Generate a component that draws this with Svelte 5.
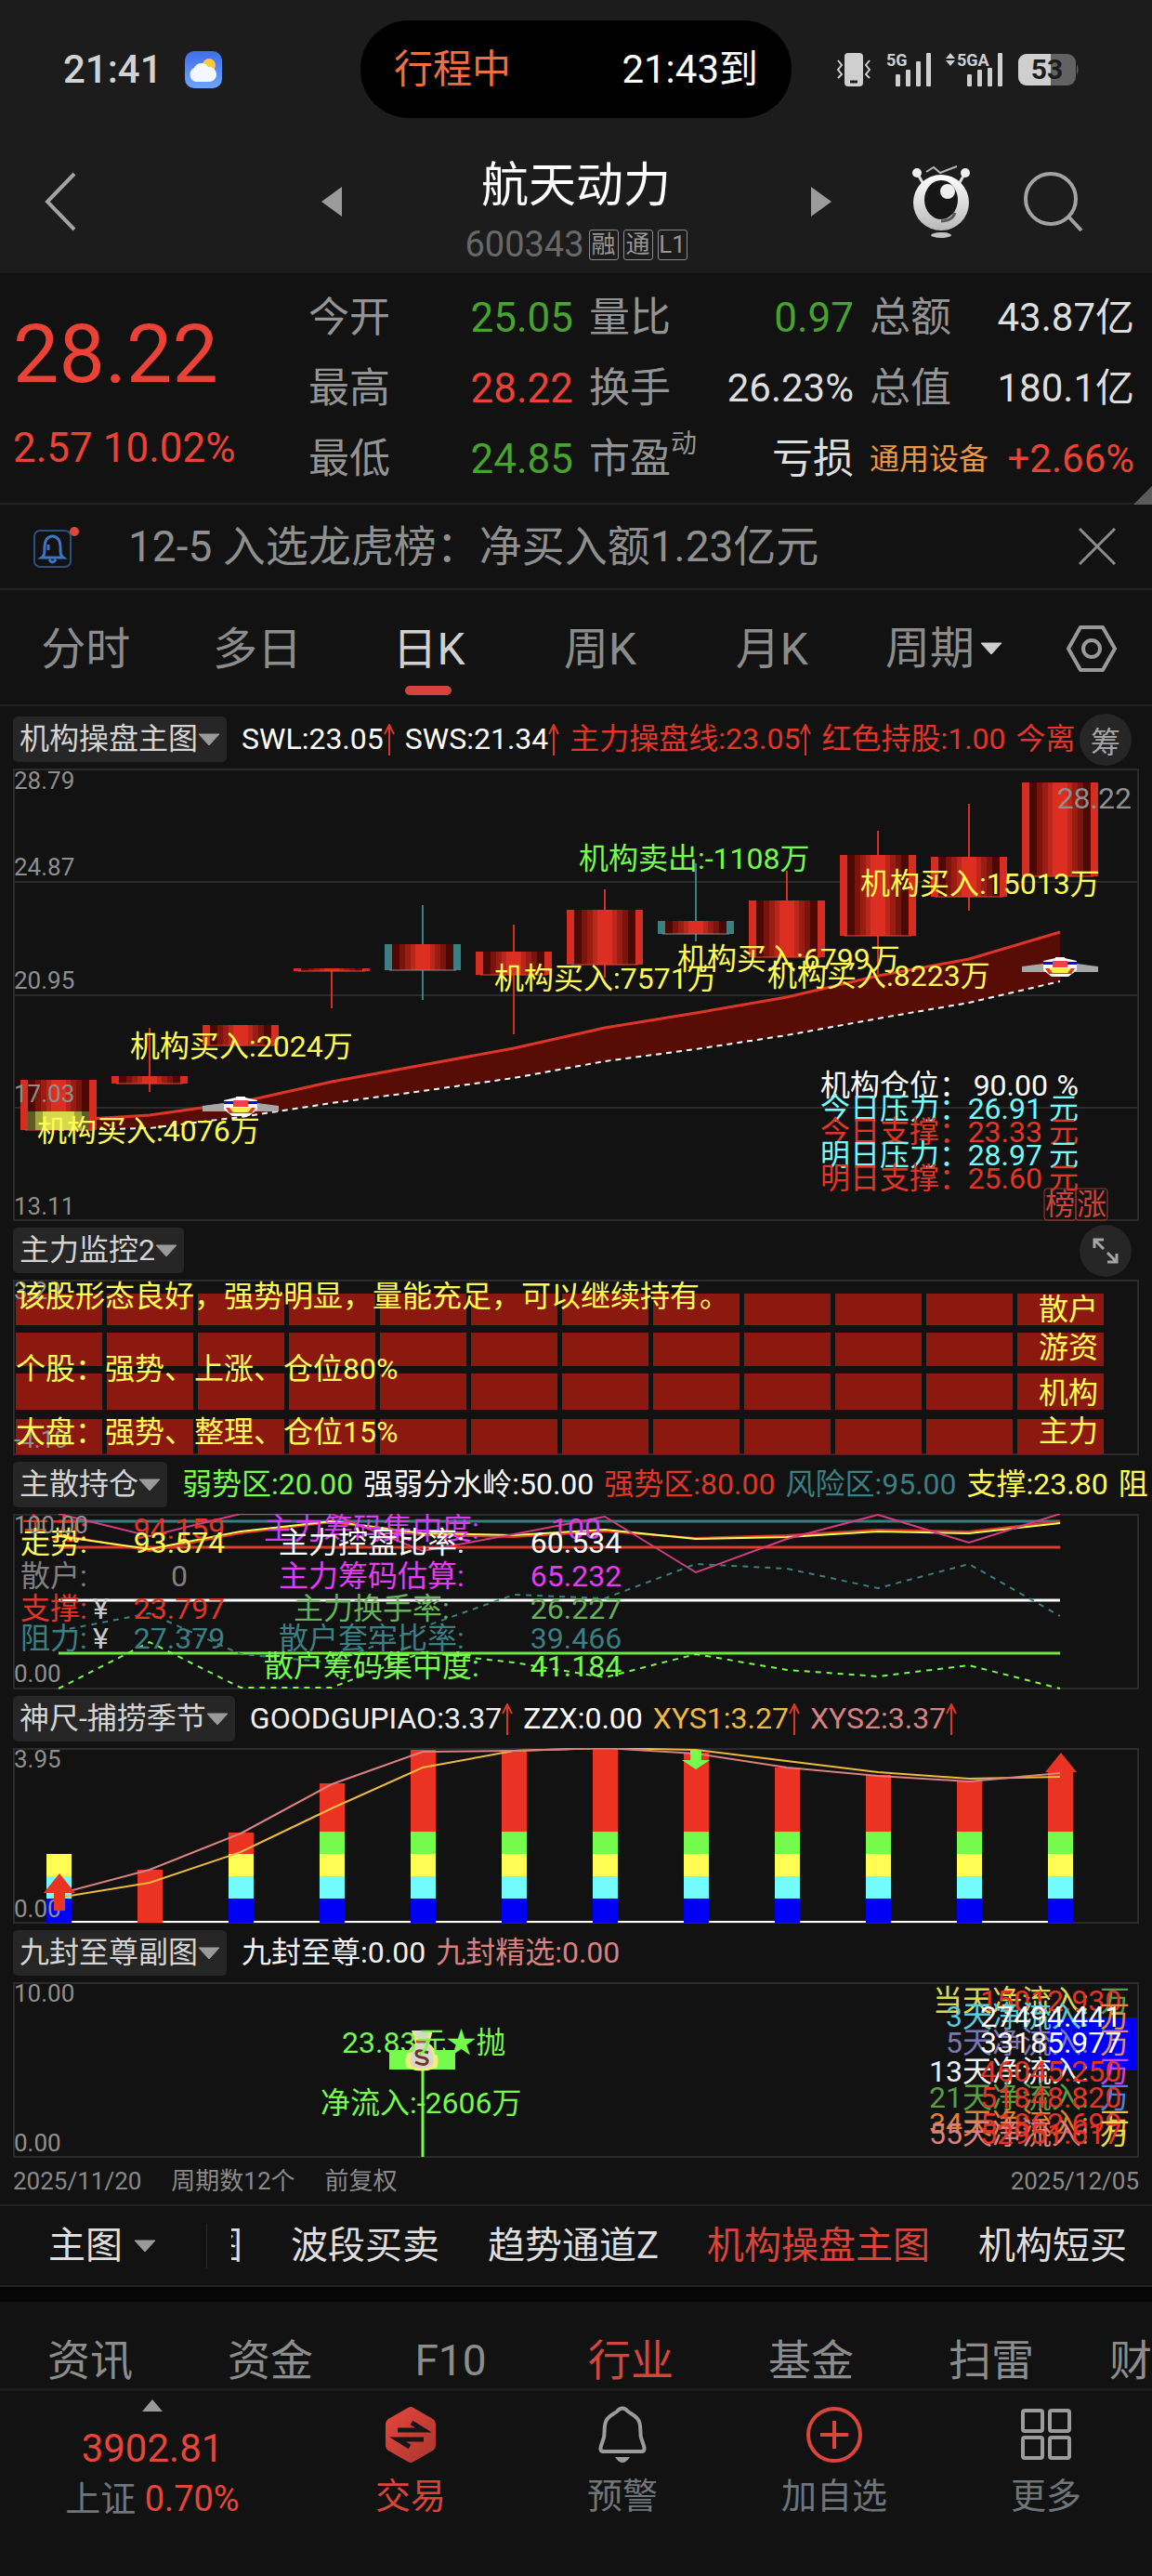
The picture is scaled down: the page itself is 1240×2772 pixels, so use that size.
<script>
	let activePeriod = '日K';
	let activeTab = '行业';
	let activeStrategy = '机构操盘主图';
	let showNotice = true;

	const periods = ['分时', '多日', '日K', '周K', '月K'];
	const tabs = ['资讯', '资金', 'F10', '行业', '基金', '扫雷', '财'];
	const strategies = ['图', '波段买卖', '趋势通道Z', '机构操盘主图', '机构短买'];

	const RED = '#e33527';
	const TEAL = '#3b7f82';
	const LIME = '#75fb4c';
	const YELLOW = '#fffb54';
	const CYAN = '#74fbfd';

	const quotes = [
		[
			{ label: '今开', value: '25.05', tone: 'down' },
			{ label: '最高', value: '28.22', tone: 'up' },
			{ label: '最低', value: '24.85', tone: 'down' }
		],
		[
			{ label: '量比', value: '0.97', tone: 'down' },
			{ label: '换手', value: '26.23%', tone: 'small' },
			{ label: '市盈', note: '动', value: '亏损', tone: '' }
		],
		[
			{ label: '总额', value: '43.87亿', tone: 'small' },
			{ label: '总值', value: '180.1亿', tone: 'small' },
			{ label: '通用设备', value: '+2.66%', tone: 'small up', sector: true }
		]
	];

	const legends = {
		main: [
			{ text: 'SWL:23.05', color: '#ffffff', up: true },
			{ text: 'SWS:21.34', color: '#ffffff', up: true },
			{ text: '主力操盘线:23.05', color: RED, up: true },
			{ text: '红色持股:1.00', color: RED },
			{ text: '今离', color: RED }
		],
		hold: [
			{ text: '弱势区:20.00', color: LIME },
			{ text: '强弱分水岭:50.00', color: '#ffffff' },
			{ text: '强势区:80.00', color: RED },
			{ text: '风险区:95.00', color: TEAL },
			{ text: '支撑:23.80', color: YELLOW },
			{ text: '阻', color: YELLOW }
		],
		ruler: [
			{ text: 'GOODGUPIAO:3.37', color: '#f0f0f0', up: true },
			{ text: 'ZZX:0.00', color: '#ffffff' },
			{ text: 'XYS1:3.27', color: '#efb93f', up: true },
			{ text: 'XYS2:3.37', color: '#d98080', up: true }
		],
		seal: [
			{ text: '九封至尊:0.00', color: '#f0f0f0' },
			{ text: '九封精选:0.00', color: '#d98080' }
		]
	};

	// chart geometry: 12 sessions, one every 98 units
	const cx = (i) => 49 + i * 98;
	const line = (values) => values.map((y, i) => `${cx(i)},${y}`).join(' ');
	const shades = [
		{ half: 33, fill: '#4a0903' },
		{ half: 25, fill: '#7a150d' },
		{ half: 19, fill: '#9a1d13' },
		{ half: 13, fill: '#b9261a' },
		{ half: 8, fill: '#dc2f21' }
	];

	const candles = [
		{ top: 335, bottom: 389, mark: 369 },
		{ top: 331, bottom: 339, high: 279, low: 348 },
		{ top: 276, bottom: 298 },
		{ top: 215, bottom: 218, high: 215, low: 258 },
		{ top: 189, bottom: 217, high: 147, low: 249, down: true },
		{ top: 197, bottom: 222, high: 168, low: 286 },
		{ top: 152, bottom: 211, high: 130, low: 225 },
		{ top: 164, bottom: 178, high: 102, low: 186, down: true },
		{ top: 142, bottom: 203, high: 110, low: 203 },
		{ top: 93, bottom: 180, high: 67, low: 221 },
		{ top: 95, bottom: 138, high: 38, low: 153 },
		{ top: 15, bottom: 116 }
	];
	const trendUp = [379, 373, 359, 337, 319, 301, 279, 263, 246, 223, 205, 176];
	const trendLow = [389, 387, 375, 360, 347, 333, 315, 302, 287, 269, 252, 229];
	const trendArea = line(trendUp) + ' ' + line(trendLow).split(' ').reverse().join(' ');

	const flows = [
		{ x: 26, y: 401, text: '机构买入:4076万' },
		{ x: 126, y: 310, text: '机构买入:2024万' },
		{ x: 518, y: 237, text: '机构买入:7571万' },
		{ x: 609, y: 108, text: '机构卖出:-1108万', sell: true },
		{ x: 715, y: 216, text: '机构买入:6799万' },
		{ x: 812, y: 234, text: '机构买入:8223万' },
		{ x: 912, y: 135, text: '机构买入:15013万' }
	];
	const levels = [
		{ label: '机构仓位：', value: '90.00', unit: '%', color: '#ffffff', end: 1114 },
		{ label: '今日压力：', value: '26.91', unit: '元', color: CYAN, end: 1108 },
		{ label: '今日支撑：', value: '23.33', unit: '元', color: RED, end: 1108 },
		{ label: '明日压力：', value: '28.97', unit: '元', color: CYAN, end: 1108 },
		{ label: '明日支撑：', value: '25.60', unit: '元', color: RED, end: 1108 }
	];

	const heatRows = [
		{ y: 15, h: 34, name: '散户', base: 43 },
		{ y: 57, h: 36, name: '游资', base: 84 },
		{ y: 101, h: 39, name: '机构', base: 133 },
		{ y: 150, h: 38, name: '主力', base: 174 }
	];

	const trend = [24, 38, 19, 8, 21, 23, 17, 27, 25, 19, 21, 10];
	const force = [22, 40, 21, 9, 23, 25, 19, 26, 23, 17, 19, 8];
	const pink = [0, 24, 0, 0, 40, 22, 3, 63, 27, 1, 31, 0];
	const risk = [126, 107, 151, 160, 122, 87, 91, 54, 59, 80, 54, 110];
	const retail = [188, 138, 187, 187, 149, 160, 176, 151, 168, 175, 163, 188];
	const holdLeft = [
		{ label: '主力:', value: '94.159', y: 27, color: RED },
		{ label: '走势:', value: '93.574', y: 42, color: YELLOW },
		{ label: '散户:', value: '0', y: 78, color: '#808080' },
		{ label: '支撑:', value: '23.797', y: 113, color: RED, yuan: true },
		{ label: '阻力:', value: '27.379', y: 145, color: TEAL, yuan: true }
	];
	const holdRight = [
		{ label: '主力筹码集中度:', value: '100', y: 27, color: '#d93bf0' },
		{ label: '主力控盘比率:', value: '60.534', y: 42, color: '#ffffff' },
		{ label: '主力筹码估算:', value: '65.232', y: 78, color: '#e53bf5' },
		{ label: '主力换手率:', value: '26.227', y: 113, color: '#67b359' },
		{ label: '散户套牢比率:', value: '39.466', y: 145, color: TEAL },
		{ label: '散户筹码集中度:', value: '41.184', y: 175, color: LIME }
	];

	const barTops = [114, 131, 91, 38, 2, 2, 0, 5, 21, 29, 35, 26];
	const xys1 = [161, 145, 112, 65, 21, 3, 0, 2, 14, 26, 33, 31];
	const xys2 = [157, 131, 92, 39, 4, 3, 0, 6, 21, 30, 36, 27];
	const steps = [
		{ y: 90, h: 24, fill: LIME, from: 3 },
		{ y: 114, h: 24, fill: '#fffd54', from: 0 },
		{ y: 138, h: 24, fill: CYAN, from: 0 },
		{ y: 162, h: 26, fill: '#0000f5', from: 0 }
	];

	const inflow = [
		{ x: 990, y: 31, label: '当天净流入:', value: '15012.930', color: '#dcd84e', num: RED, unit: '#5c9a48' },
		{ x: 1004, y: 48, label: '3天净流入:', value: '27494.441', color: '#5bc8dc', num: '#ffffff', unit: '#e9893c' },
		{ x: 1004, y: 76, label: '5天净流入:', value: '33185.977', color: '#7b76b8', num: '#ffffff', unit: '#df8680' },
		{ x: 986, y: 107, label: '13天净流入:', value: '46045.250', color: '#f2f2f2', num: RED, unit: '#cc40ea' },
		{ x: 986, y: 135, label: '21天净流入:', value: '51848.820', color: '#5a9e40', num: RED, unit: '#4a80e4' },
		{ x: 986, y: 163, label: '34天净流入:', value: '51862.699', color: '#e0812f', num: RED, unit: '#f1bd40' },
		{ x: 986, y: 174, label: '55天净流入:', value: '52951.617', color: '#d98080', num: RED, unit: '#ebe04a' }
	];
</script>

{#snippet caret()}
	<svg class="caret" width="24" height="14" viewBox="0 0 24 14"><path d="M1 1h22L12 13z" fill="currentColor" stroke="currentColor" stroke-linejoin="round"/></svg>
{/snippet}

{#snippet panelHead(name, items)}
	<div class="panel-head">
		<button class="chip" aria-haspopup="menu">{name}{@render caret()}</button>
		<div class="legend">
			{#each items as item}
				<span class="legend-item" style="color: {item.color}">
					{item.text}{#if item.up}<svg class="rise" width="12" height="34" viewBox="0 0 12 34" fill="none" stroke="#d8382c" stroke-width="2"><path d="M6 34V2M1 11L6 1l5 10"/></svg>{/if}
				</span>
			{/each}
		</div>
	</div>
{/snippet}

{#snippet ufo(x, y)}
	<g transform="translate({x} {y})">
		<path d="M-41-1L-18-4H18L41-1V5H-41z" fill="#a6a6a6"/>
		<path d="M-18 3V-7L-5-10V-11H5V-10L18-7V3L9 10H-9z" fill="#fff"/>
		<path d="M-18-6H18V-3H-18z" fill="#0b0bd8"/>
		<path d="M-8-7H8V0H-8z" fill="#ef4050"/>
		<path d="M-16 1H16L12 7H-12z" fill="#e33527"/>
		<path d="M-12 1H12L8 6H-8z" fill="#ffee4a"/>
		<path d="M-5 7H5V10H-5z" fill="#fff"/>
	</g>
{/snippet}

<div class="app">
	<header class="top">
		<div class="status">
			<div class="status-left">
				<span class="clock">21:41</span>
				<svg width="40" height="40" viewBox="0 0 40 40">
					<defs>
						<linearGradient id="sky" x2="0" y2="1"><stop offset="0" stop-color="#3f6eea"/><stop offset="1" stop-color="#6ea4ff"/></linearGradient>
					</defs>
					<rect width="40" height="40" rx="10" fill="url(#sky)"/>
					<circle cx="26" cy="15" r="7" fill="#fcc93a"/>
					<path d="M12 33a8 8 0 0 1-2-15 8.500 8.500 0 0 1 15-1 8 8 0 0 1 2 16z" fill="#f4f7ff"/>
				</svg>
			</div>
			<div class="island">
				<span class="trip">行程中</span>
				<span>21:43到</span>
			</div>
			<div class="status-right">
				<svg width="38" height="38" viewBox="0 0 38 38" fill="none" stroke="#cfcfcf" stroke-width="2">
					<rect x="9" y="1" width="20" height="36" rx="4" fill="#cfcfcf" stroke="none"/>
					<path d="M15 32h8" stroke="#1c1c1c" stroke-width="3"/>
					<path d="M2 9l4 5-4 5 4 5-4 4M36 9l-4 5 4 5-4 5 4 4"/>
				</svg>
				<svg width="48" height="38" viewBox="0 0 48 38" fill="#cfcfcf">
					<text x="0" y="15" class="net">5G</text>
					<rect x="10" y="24" width="5" height="13" rx="1"/><rect x="21" y="19" width="5" height="18" rx="1"/><rect x="32" y="10" width="5" height="27" rx="1"/><rect x="43" y="1" width="5" height="36" rx="1"/>
				</svg>
				<svg width="62" height="38" viewBox="0 0 62 38" fill="#cfcfcf">
					<path d="M5 1l5 6H0zM5 15l5-6H0z"/>
					<text x="12" y="15" class="net">5GA</text>
					<rect x="23" y="24" width="5" height="13" rx="1"/><rect x="34" y="19" width="5" height="18" rx="1"/><rect x="45" y="17" width="5" height="20" rx="1"/><rect x="56" y="1" width="5" height="36" rx="1"/>
				</svg>
				<svg width="65" height="34" viewBox="0 0 65 34">
					<rect width="62" height="34" rx="9" fill="#626262"/>
					<path d="M9 0h26v34H9a9 9 0 0 1-9-9V9a9 9 0 0 1 9-9z" fill="#cfcfcf"/>
					<path d="M63 11q3 6 0 12z" fill="#626262"/>
					<text x="31" y="27" class="charge" text-anchor="middle">53</text>
				</svg>
			</div>
		</div>

		<div class="titlebar">
			<div class="nav-cell">
				<button class="icon-btn back" aria-label="返回">
					<svg width="34" height="64" viewBox="0 0 34 64" fill="none" stroke="#a3a3a3" stroke-width="4"><path d="M32 2L3 32l29 30"/></svg>
				</button>
			</div>
			<button class="icon-btn step" aria-label="上一只"><svg width="22" height="32" viewBox="0 0 22 32"><path d="M22 0v32L0 16z" fill="#9b9b9b"/></svg></button>
			<div class="title">
				<h1>航天动力</h1>
				<p>600343 <i>融</i><i>通</i><i>L1</i></p>
			</div>
			<button class="icon-btn step" aria-label="下一只"><svg width="22" height="32" viewBox="0 0 22 32"><path d="M0 0v32l22-16z" fill="#9b9b9b"/></svg></button>
			<div class="nav-cell tools">
				<button class="icon-btn" aria-label="助手">
					<svg width="62" height="78" viewBox="0 0 62 78">
						<defs><linearGradient id="body" x2="0" y2="1"><stop offset="0" stop-color="#fff"/><stop offset="1" stop-color="#b9b9b9"/></linearGradient></defs>
						<path d="M15 7l8-5 7 6L48 1" fill="none" stroke="#b5b5b5" stroke-width="2"/>
						<path d="M5 8l7 12M57 8l-7 12" stroke="#ddd" stroke-width="3"/>
						<circle cx="5" cy="8" r="5" fill="#eee"/><circle cx="57" cy="8" r="5" fill="#eee"/>
						<circle cx="31" cy="40" r="30" fill="url(#body)"/>
						<ellipse cx="31" cy="37" rx="18" ry="21" fill="#161616"/>
						<ellipse cx="38" cy="28" rx="8" ry="8" fill="#eee"/>
						<path d="M31 60q12 0 15-9" fill="none" stroke="#555" stroke-width="3"/>
						<ellipse cx="31" cy="75" rx="11" ry="3" fill="#c4c4c4"/>
					</svg>
				</button>
				<button class="icon-btn" aria-label="搜索">
					<svg width="64" height="66" viewBox="0 0 64 66" fill="none" stroke="#a3a3a3" stroke-width="4"><circle cx="29" cy="30" r="27"/><path d="M48 49l14 15"/></svg>
				</button>
			</div>
		</div>
	</header>

	<section class="quote">
		<div class="price">
			<strong>28.22</strong>
			<span>2.57 10.02%</span>
		</div>
		{#each quotes as column}
			<dl>
				{#each column as row}
					<div class="quote-row">
						<dt class:sector={row.sector}>{row.label}{#if row.note}<sup>{row.note}</sup>{/if}</dt>
						<dd class={row.tone}>{row.value}</dd>
					</div>
				{/each}
			</dl>
		{/each}
		<svg class="corner" width="20" height="20" viewBox="0 0 20 20"><path d="M20 0v20H0z" fill="#5a5a5a"/></svg>
	</section>

	{#if showNotice}
		<section class="notice">
			<svg width="50" height="50" viewBox="0 0 50 50" fill="none" stroke="#3f74c4" stroke-width="2">
				<rect x="1" y="8" width="39" height="39" rx="6" stroke="#2d4f80"/>
				<path d="M9 37c3-2 3-5 3-12 0-6 3-11 8.500-11S29 19 29 25c0 7 0 10 3 12zM17 39q3.500 6 7 0M16 23v6" stroke-width="3"/>
				<circle cx="44" cy="9" r="5" fill="#db473b" stroke="none"/>
			</svg>
			<p>12-5 入选龙虎榜：净买入额1.23亿元</p>
			<button class="icon-btn" aria-label="关闭" on:click={() => (showNotice = false)}>
				<svg width="40" height="40" viewBox="0 0 40 40" stroke="#8c8c8c" stroke-width="3"><path d="M1 1l38 38M39 1L1 39"/></svg>
			</button>
		</section>
	{/if}

	<nav class="periods">
		{#each periods as period}
			<button class:active={activePeriod === period} on:click={() => (activePeriod = period)}>{period}</button>
		{/each}
		<div class="period-more">
			<button aria-haspopup="menu">周期{@render caret()}</button>
			<button class="icon-btn" aria-label="设置">
				<svg width="54" height="50" viewBox="0 0 54 50" fill="none" stroke="#999" stroke-width="4"><path d="M15 2h24l13 23-13 23H15L2 25z" stroke-linejoin="round"/><circle cx="27" cy="25" r="9"/></svg>
			</button>
		</div>
	</nav>

	<main>
		<section class="panel">
			{@render panelHead('机构操盘主图', legends.main)}
			<button class="round">筹</button>
			<svg class="chart" viewBox="0 0 1212 487">
				<path class="frame" d="M1 1H1211V486H1zM1 122H1211M1 244H1211M1 365H1211"/>
				<polygon points={trendArea} fill="#580c06"/>
				<polyline points={line(trendUp)} fill="none" stroke="#df3527" stroke-width="3"/>
				<polyline points={line(trendLow)} fill="none" stroke="#fff" stroke-width="2" stroke-dasharray="6 5"/>
				{#each candles as c, i}
					{@const edge = c.down ? TEAL : '#d52d20'}
					{#if c.high}
						<path d="M{cx(i)} {c.high}V{c.low}" stroke={edge} stroke-width="2"/>
					{/if}
					<rect x={cx(i) - 41} y={c.top} width="82" height={c.bottom - c.top} fill={edge}/>
					{#each shades as s}
						<rect x={cx(i) - s.half} y={c.top} width={s.half * 2} height={c.bottom - c.top} fill={s.fill}/>
					{/each}
					<path d="M{cx(i) - 36} {c.bottom}H{cx(i) + 36}" stroke={c.down ? '#8a8a8a' : '#e0483b'}/>
					{#if c.mark}
						<rect x={cx(i) - 33} y={c.mark} width="66" height={c.bottom - c.mark} fill="#5b5b24"/>
						<rect x={cx(i) - 25} y={c.mark} width="50" height={c.bottom - c.mark} fill="#a3a33c"/>
						<rect x={cx(i) - 17} y={c.mark} width="34" height={c.bottom - c.mark} fill="#d8d84e"/>
					{/if}
				{/each}
				{@render ufo(cx(2), 364)}
				{@render ufo(cx(11), 214)}
				<g class="axis">
					<text x="1" y="22">28.79</text>
					<text x="1" y="115">24.87</text>
					<text x="1" y="237">20.95</text>
					<text x="1" y="359">17.03</text>
					<text x="1" y="480">13.11</text>
				</g>
				{#each flows as f}
					<text x={f.x} y={f.y} fill={f.sell ? LIME : YELLOW}>{f.text}</text>
				{/each}
				<text x="1204" y="43" text-anchor="end" fill="#8f8f8f">28.22</text>
				{#each levels as l, i}
					<g fill={l.color}>
						<text x="869" y={352 + i * 25}>{l.label}</text>
						<text x={l.end} y={352 + i * 25} text-anchor="end">{l.value}</text>
						<text x="1147" y={352 + i * 25} text-anchor="end">{l.unit}</text>
					</g>
				{/each}
				<g fill="none" stroke="#a8352d">
					<rect x="1110" y="452" width="34" height="34" rx="3"/>
					<rect x="1144" y="452" width="34" height="34" rx="3"/>
				</g>
				<g fill="#c9453b">
					<text x="1111" y="480">榜</text>
					<text x="1145" y="480">涨</text>
				</g>
			</svg>
		</section>

		<section class="panel">
			{@render panelHead('主力监控2', [])}
			<button class="round" aria-label="全屏">
				<svg width="28" height="28" viewBox="0 0 28 28" fill="none" stroke="#a5a5a5" stroke-width="3"><path d="M2 11V2h10M2 2l10 10M26 17v9H16M26 26L16 16"/></svg>
			</button>
			<svg class="chart" viewBox="0 0 1212 189">
				<path class="frame" d="M1 1H1211V188H1z"/>
				{#each heatRows as row}
					{#each candles as _, i}
						<rect x={3 + i * 98} y={row.y} width="93" height={row.h} fill="#8b190f"/>
					{/each}
					<text x="1104" y={row.base} fill={YELLOW}>{row.name}</text>
				{/each}
				<g class="axis">
					<text x="1" y="21">3.20</text>
					<text x="1" y="181">-4.10</text>
				</g>
				<g fill={YELLOW}>
					<text x="3" y="29">该股形态良好，强势明显，量能充足，可以继续持有。</text>
					<text x="3" y="107">个股：强势、上涨、仓位80%</text>
					<text x="3" y="175">大盘：强势、整理、仓位15%</text>
				</g>
			</svg>
		</section>

		<section class="panel">
			{@render panelHead('主散持仓', legends.hold)}
			<svg class="chart" viewBox="0 0 1212 189">
				<path class="frame" d="M1 1H1211V188H1z"/>
				<g fill="none" stroke-width="3">
					<path d="M49 8H1127" stroke={TEAL}/>
					<path d="M49 36H1127" stroke="#dc3b2d"/>
					<path d="M49 93H1127" stroke="#fff"/>
					<path d="M49 150H1127" stroke="#6de83f"/>
				</g>
				<g fill="none" stroke-width="2">
					<polyline points={line(force)} stroke={RED}/>
					<polyline points={line(trend)} stroke={YELLOW}/>
					<polyline points={line(pink)} stroke="#d43c80"/>
					<polyline points={line(risk)} stroke={TEAL} stroke-dasharray="6 6"/>
					<polyline points={line(retail)} stroke={LIME} stroke-dasharray="6 6"/>
				</g>
				{#each holdLeft as h}
					<g fill={h.color}>
						<text x="8" y={h.y}>{h.label}</text>
						{#if h.yuan}<text x="86" y={h.y} fill="#c8c8c8">¥</text>{/if}
						<text x="179" y={h.y} text-anchor="middle">{h.value}</text>
					</g>
				{/each}
				{#each holdRight as h}
					<g fill={h.color}>
						<text x="386" y={h.y} text-anchor="middle">{h.label}</text>
						<text x="606" y={h.y} text-anchor="middle">{h.value}</text>
					</g>
				{/each}
				<g class="axis">
					<text x="1" y="21">100.00</text>
					<text x="1" y="181">0.00</text>
				</g>
			</svg>
		</section>

		<section class="panel">
			{@render panelHead('神尺-捕捞季节', legends.ruler)}
			<svg class="chart" viewBox="0 0 1212 189">
				<path class="frame" d="M1 1H1211V188H1z"/>
				<path d="M49 187H1127" stroke="#fff" stroke-width="2"/>
				{#each barTops as top, i}
					<rect x={cx(i) - 13} y={top} width="27" height={188 - top} fill="#ea3323"/>
					{#if i !== 1}
						{#each steps as s}
							{#if i >= s.from}
								<rect x={cx(i) - 13} y={s.y} width="27" height={s.h} fill={s.fill}/>
							{/if}
						{/each}
					{/if}
				{/each}
				<g fill="none" stroke-width="2">
					<polyline points={line(xys1)} stroke="#efb93f"/>
					<polyline points={line(xys2)} stroke="#d98080"/>
				</g>
				<g class="axis">
					<text x="1" y="21">3.95</text>
					<text x="1" y="182">0.00</text>
				</g>
				<path d="M50 135l17 21H56v19H44V156H33z" fill="#ea3323"/>
				<path d="M1128 5l17 21h-34z" fill="#ea3323"/>
				<path d="M729 2h12v11h9l-15 10-15-10h9z" fill={LIME}/>
			</svg>
		</section>

		<section class="panel">
			{@render panelHead('九封至尊副图', legends.seal)}
			<svg class="chart" viewBox="0 0 1212 189">
				<path class="frame" d="M1 1H1211V188H1z"/>
				<g class="axis">
					<text x="1" y="21">10.00</text>
					<text x="1" y="182">0.00</text>
				</g>
				<path d="M405 73H476V94H405z" fill={LIME}/>
				<path d="M441 94V188" stroke={LIME} stroke-width="3"/>
				<path d="M429 52H452L448 66C456 72 460 84 456 92Q440 99 424 92C420 84 424 72 433 66z" fill="#f2ee7a"/>
				<path d="M433 53H448L445 66C452 72 455 84 451 90Q440 96 429 90C426 84 428 72 436 66z" fill="#dad6cc"/>
				<path d="M434 64h13" stroke="#9a6a35" stroke-width="3"/>
				<path d="M447 76q-13-5-13 1 0 3 6 4 7 1 6 5-2 5-13 0" fill="none" stroke="#6d3328" stroke-width="3"/>
				<g fill={LIME}>
					<text x="354" y="76">23.83元★抛</text>
					<text x="331" y="141">净流入:-2606万</text>
				</g>
				<path d="M1114 38H1210V95H1114z" fill="#0000f5"/>
				{#each inflow as f}
					<text x={f.x} y={f.y} fill={f.color}>{f.label}</text>
					<text x="1170" y={f.y} fill={f.unit}>万</text>
					<text x="1041" y={f.y} fill={f.num}>{f.value}</text>
				{/each}
			</svg>
			<div class="range">
				<span>2025/11/20</span>
				<span>周期数12个</span>
				<span>前复权</span>
				<span class="end">2025/12/05</span>
			</div>
		</section>
	</main>

	<nav class="strategies">
		<button class="pick" aria-haspopup="menu">主图{@render caret()}</button>
		<div class="strip">
			{#each strategies as item}
				<button class:active={activeStrategy === item} on:click={() => (activeStrategy = item)}>{item}</button>
			{/each}
		</div>
	</nav>

	<nav class="tabs">
		{#each tabs as tab}
			<button class:active={activeTab === tab} on:click={() => (activeTab = tab)}>{tab}</button>
		{/each}
	</nav>

	<footer>
		<button class="index">
			<svg width="22" height="13" viewBox="0 0 22 13"><path d="M11 0l11 13H0z" fill="#999"/></svg>
			<strong>3902.81</strong>
			<span>上证 <em>0.70%</em></span>
		</button>
		<button class="action hot">
			<svg width="60" height="62" viewBox="0 0 60 62">
				<defs><linearGradient id="trade" x2="1" y2="1"><stop offset="0" stop-color="#e8463b"/><stop offset="1" stop-color="#a93630"/></linearGradient></defs>
				<path d="M27 2q3-2 6 0l21 12q3 2 3 5v24q0 3-3 5L33 60q-3 2-6 0L6 48q-3-2-3-5V19q0-3 3-5z" fill="url(#trade)"/>
				<path d="M16 26h28l-13-8M44 36H16l13 8" fill="none" stroke="#161616" stroke-width="5"/>
			</svg>
			交易
		</button>
		<button class="action">
			<svg width="60" height="62" viewBox="0 0 60 62" fill="none" stroke="#9b9b9b" stroke-width="4">
				<path d="M10 49q-5 0-3-6l3-9c1-4 0-12 2-17 2-6 8-8 12-11q6-7 12 0c4 3 10 5 12 11 2 5 1 13 2 17l3 9q2 6-3 6z"/>
				<path d="M22 55h16q-8 12-16 0z" fill="#9b9b9b" stroke="none"/>
			</svg>
			预警
		</button>
		<button class="action">
			<svg width="60" height="62" viewBox="0 0 60 62" fill="none" stroke="#dc453b" stroke-width="4"><circle cx="30" cy="31" r="28"/><path d="M30 16v30M15 31h30"/></svg>
			加自选
		</button>
		<button class="action">
			<svg width="60" height="62" viewBox="0 0 60 62" fill="none" stroke="#9b9b9b" stroke-width="4">
				<rect x="5" y="5" width="21" height="22" rx="2"/><rect x="34" y="5" width="21" height="22" rx="2"/>
				<rect x="5" y="34" width="21" height="22" rx="2"/><rect x="34" y="34" width="21" height="22" rx="2"/>
			</svg>
			更多
		</button>
	</footer>
</div>

<style>
	:global(body) {
		margin: 0;
		background: #121212;
	}

	.app {
		background: #121212;
		color: #dedede;
		font-family: Roboto, 'Noto Sans CJK SC', sans-serif;
		font-size: 32px;
		overflow: hidden;
	}

	svg {
		display: block;
		flex-shrink: 0;
	}

	button {
		border: none;
		background: none;
		padding: 0;
		color: inherit;
		font: inherit;
		white-space: nowrap;
		cursor: pointer;
	}

	h1, p, dl, dd {
		margin: 0;
	}

	.top {
		background: #1c1c1c;
	}

	.status {
		display: grid;
		grid-template-columns: 1fr 464px 1fr;
		align-items: center;
		height: 149px;
	}

	.status-left {
		display: flex;
		align-items: center;
		gap: 24px;
		padding-left: 68px;
	}

	.clock {
		color: #d2d2d2;
		font-size: 42px;
		font-weight: 500;
	}

	.island {
		display: flex;
		align-items: center;
		justify-content: space-between;
		box-sizing: border-box;
		height: 105px;
		padding: 0 36px;
		border-radius: 52px;
		background: #000;
		color: #fff;
		font-size: 42px;
		line-height: 48px;
	}

	.trip {
		color: #ec7040;
	}

	.status-right {
		display: flex;
		align-items: center;
		justify-content: flex-end;
		gap: 16px;
		padding-right: 79px;
	}

	.net {
		font-size: 18px;
		font-weight: 700;
	}

	.charge {
		fill: #1c1c1c;
		font-size: 30px;
		font-weight: 700;
	}

	.titlebar {
		display: grid;
		grid-template-columns: 1fr 22px 505px 22px 1fr;
		height: 145px;
	}

	.nav-cell,
	.step {
		display: flex;
		align-items: center;
		height: 136px;
	}

	.back {
		padding-left: 48px;
	}

	.tools {
		justify-content: flex-end;
		gap: 58px;
		padding-right: 74px;
	}

	.title {
		padding-top: 19px;
		text-align: center;
	}

	.title h1 {
		color: #fff;
		font-size: 51px;
		font-weight: 400;
		line-height: 64px;
	}

	.title p {
		display: flex;
		align-items: center;
		justify-content: center;
		gap: 5px;
		height: 62px;
		color: #686868;
		font-size: 38px;
	}

	.title i {
		box-sizing: border-box;
		width: 32px;
		border: 1px solid #8c8c8c;
		border-radius: 3px;
		color: #969696;
		font-size: 26px;
		font-style: normal;
		line-height: 31px;
	}

	.quote {
		position: relative;
		display: grid;
		grid-template-columns: 301px 1fr 1fr 1fr;
		gap: 17px;
		padding: 10px 19px 9px 14px;
		border-bottom: 2px solid #222;
	}

	.price {
		color: #ea4236;
	}

	.price strong {
		display: block;
		font-size: 88px;
		font-weight: 400;
		line-height: 154px;
	}

	.price span {
		display: block;
		font-size: 44px;
		line-height: 48px;
	}

	.quote-row {
		display: flex;
		justify-content: space-between;
		font-size: 44px;
		line-height: 76px;
		white-space: nowrap;
	}

	dt {
		color: #949494;
	}

	dt.sector {
		color: #e8963f;
		font-size: 32px;
	}

	dt sup {
		font-size: 28px;
		line-height: 28px;
		vertical-align: 22px;
	}

	dd.small {
		font-size: 42px;
	}

	dd.up {
		color: #ea4236;
	}

	dd.down {
		color: #47a22e;
	}

	.corner {
		position: absolute;
		right: 0;
		bottom: -2px;
	}

	.notice {
		display: flex;
		align-items: center;
		height: 90px;
		padding: 0 39px 0 36px;
		border-bottom: 2px solid #222;
		color: #8f8f8f;
		font-size: 46px;
		line-height: 90px;
	}

	.notice p {
		flex: 1;
		padding-left: 52px;
	}

	.periods {
		display: grid;
		grid-template-columns: repeat(5, 1fr) 317px;
		height: 123px;
		border-bottom: 2px solid #222;
		color: #8c8c8c;
		font-size: 48px;
		line-height: 60px;
	}

	.periods > button {
		position: relative;
		padding-top: 4px;
	}

	.periods .active {
		color: #d0d0d0;
	}

	.periods .active::after {
		content: '';
		position: absolute;
		left: calc(50% - 25px);
		bottom: 10px;
		width: 50px;
		height: 10px;
		border-radius: 5px;
		background: #d4443b;
	}

	.period-more {
		display: flex;
		align-items: center;
		justify-content: space-between;
		padding: 2px 38px 0 30px;
	}

	.period-more button,
	.pick {
		display: flex;
		align-items: center;
		gap: 6px;
	}

	.period-more .caret {
		color: #cfcfcf;
	}

	main {
		padding: 4px 14px 0;
	}

	.panel {
		position: relative;
	}

	.panel-head {
		display: flex;
		gap: 16px;
		margin-right: -14px;
		padding: 7px 0;
		line-height: 49px;
		white-space: nowrap;
	}

	.chip {
		display: flex;
		align-items: center;
		flex-shrink: 0;
		height: 49px;
		padding: 0 7px;
		border-radius: 5px;
		background: #262626;
		color: #d4d4d4;
	}

	.caret {
		color: #9a9a9a;
	}

	.legend {
		display: flex;
		gap: 11px;
	}

	.legend-item {
		display: flex;
		align-items: center;
	}

	.round {
		position: absolute;
		top: 4px;
		right: 8px;
		display: flex;
		align-items: center;
		justify-content: center;
		width: 56px;
		height: 56px;
		border-radius: 50%;
		background: #262626;
		color: #a5a5a5;
	}

	.chart {
		width: 100%;
		height: auto;
	}

	.frame {
		fill: none;
		stroke: #2b2b2b;
		stroke-width: 2;
	}

	.axis {
		fill: #8f8f8f;
		font-size: 26px;
	}

	.range {
		display: flex;
		gap: 32px;
		color: #8a8a8a;
		font-size: 26px;
		line-height: 50px;
	}

	.range .end {
		margin-left: auto;
	}

	.strategies {
		display: flex;
		align-items: center;
		height: 85px;
		border: solid #232323;
		border-width: 2px 0;
		font-size: 40px;
		line-height: 48px;
	}

	.pick {
		padding: 0 54px 0 52px;
		gap: 12px;
		border-right: 1px solid #2b2b2b;
	}

	.strip {
		display: flex;
		gap: 52px;
		flex: 1;
		margin-left: 26px;
		overflow: hidden;
	}

	.strip button:first-child {
		margin-left: -28px;
	}

	.strip .active,
	.tabs .active {
		color: #d8443a;
	}

	.tabs {
		display: flex;
		height: 93px;
		border-top: 16px solid #060606;
		border-bottom: 3px solid #1e1e1e;
		color: #8c8c8c;
		font-size: 46px;
		line-height: 60px;
		overflow: hidden;
	}

	.tabs button {
		flex-shrink: 0;
		min-width: 194px;
		padding-top: 32px;
	}

	.tabs button:last-child {
		min-width: 0;
		padding-left: 30px;
	}

	footer {
		display: grid;
		grid-template-columns: 328px repeat(4, 1fr);
		height: 199px;
		color: #70757a;
		font-size: 38px;
	}

	footer button {
		display: flex;
		flex-direction: column;
		align-items: center;
	}

	.index {
		padding-top: 9px;
	}

	.index strong {
		color: #e64539;
		font-size: 42px;
		font-weight: 400;
		line-height: 80px;
	}

	.index span {
		line-height: 28px;
	}

	.index em {
		color: #e64539;
		font-style: normal;
	}

	.action {
		padding-top: 16px;
		line-height: 70px;
	}

	.hot {
		color: #d8443a;
	}
</style>
